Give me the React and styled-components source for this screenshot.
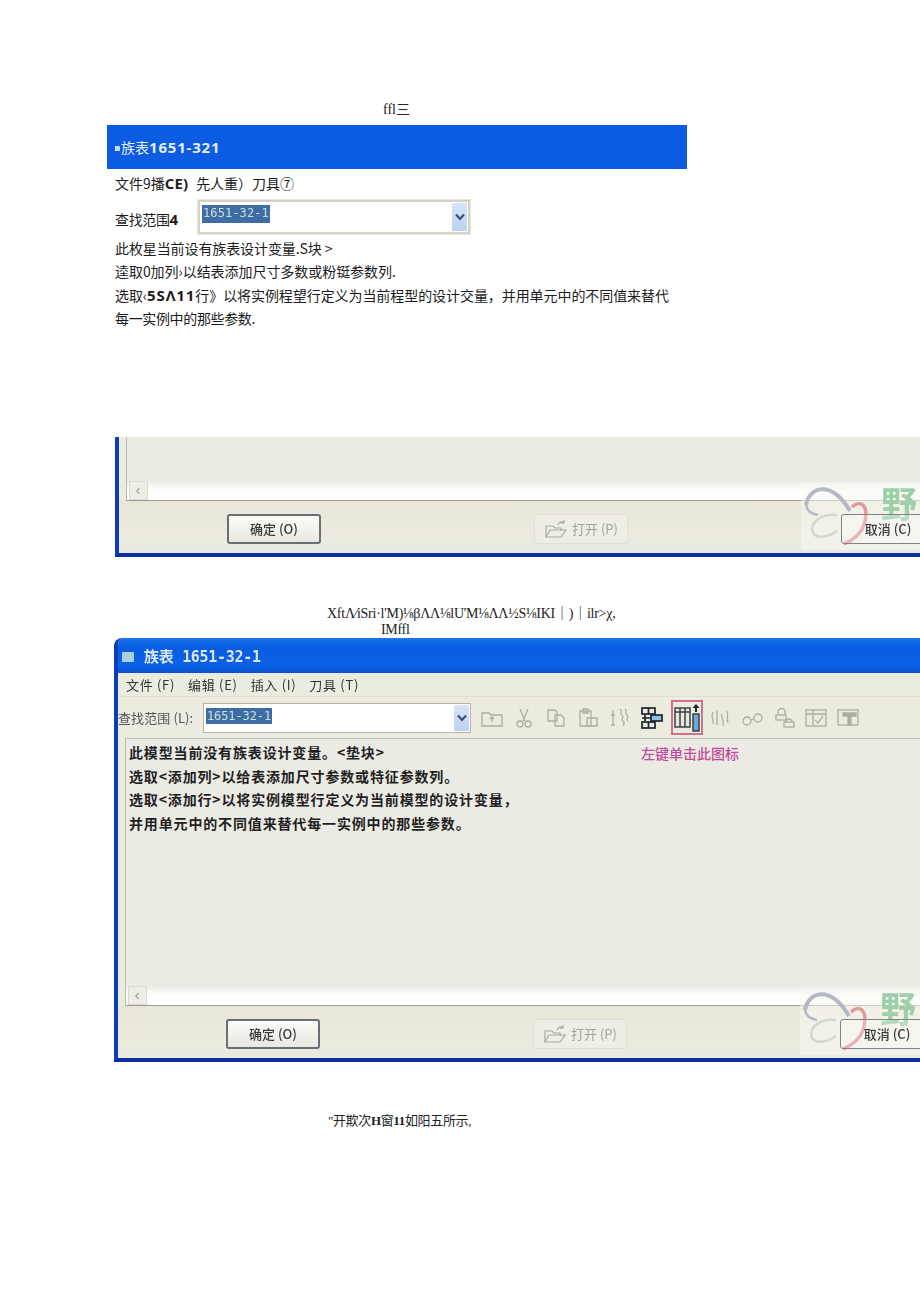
import React from "react";
import styled, { createGlobalStyle } from "styled-components";

const Global = createGlobalStyle`
  html, body { margin: 0; padding: 0; background: #fff; }
  body { width: 920px; height: 1301px; overflow: hidden; }
`;
const cjk = `"Noto Sans CJK SC", "Noto Sans", sans-serif`;
const Page = styled.div`
  width: 920px; height: 1301px; overflow: hidden; padding-top: 101px; box-sizing: border-box;
  font-family: ${cjk}; color: #1c1c1c;
`;
const Caption = styled.div`
  font-family: "Liberation Serif", "Noto Sans CJK SC", serif;
  font-size: ${p => p.$size || 14}px; line-height: ${p => p.$lh || 17}px; color: #222;
  margin-left: ${p => p.$left}px; margin-top: ${p => p.$top || 0}px;
  letter-spacing: ${p => p.$ls || 0}px; white-space: nowrap;
`;
const Doc = styled.div`
  width: 580px; margin: 7px 0 0 107px;
`;
const Title = styled.div`
  height: 44px; background: #0b5ce2; color: #e3edf7; display: flex; align-items: center;
  padding-left: 8px; font-size: 14px; font-weight: 400;
  b { font-family: "Open Sans", sans-serif; font-weight: 700; letter-spacing: .8px; font-size: 15px; }
  i { width: 5px; height: 5px; background: #c9d9ee; margin-right: 1px; margin-top: 2px; }
`;
const DocBody = styled.div`
  padding: 4px 0 0 8px; font-size: 14px; line-height: 23.3px; white-space: nowrap; letter-spacing: -.1px;
  b { font-family: "Open Sans", sans-serif; font-weight: 700; font-size: 15px; letter-spacing: .9px; }
`;
const MenuLine = styled.div`
  line-height: 20px; letter-spacing: 0;
  span { margin-left: 8px; }
  b { letter-spacing: .1px; }
`;
const FindRow = styled.div`
  display: flex; align-items: center; margin: 4px 0 3px; height: 37px;
`;
const FindLabel = styled.span`width: 83px; margin-top: 8px; flex: none; letter-spacing: -.35px;`;
const Combo = styled.div`
  width: 268px; height: 30px; margin-top: 2px; background: #fff; border: 2px solid #d4d2c6; outline: 1px solid #e8e7df; display: flex; justify-content: space-between;
  span { align-self: flex-start; background: #3e6ca5; color: #c9e0e0; font: 12px/17px "DejaVu Sans Mono", monospace; height: 18px; padding: 0 1px; margin: 3px 0 0 2px; letter-spacing: .1px; filter: blur(.4px); }
`;
const Arrow = styled.div`
  width: 15px; margin: 1px; background: linear-gradient(#d6e4f7, #bcd2f1); display: flex; align-items: center; justify-content: center; color: #33507a;
`;
const Line = styled.div`letter-spacing: ${p => p.$ls}px;`;
const Win = styled.div`
  position: relative; margin: ${p => p.$top}px 0 0 ${p => p.$left}px; width: 806px; height: ${p => p.$h}px; box-sizing: border-box;
  background: #ecebdf; overflow: hidden; filter: blur(.4px);
  border-left: 4px solid #0a3cbb; border-bottom: 4px solid #0b2fa0;
  border-top-left-radius: ${p => p.$round ? 8 : 0}px;
  display: flex; flex-direction: column;
`;
const WinTitle = styled.div`
  height: 35px; flex: none; box-sizing: border-box; padding: 3px 0 0 4px; background: linear-gradient(#1a76ec, #0a5ce0 25%, #0b61e6 80%, #0a4fcf); color: #d8e6f5; display: flex; align-items: center; gap: 10px;
  font: 700 15px/1 "DejaVu Sans Mono", ${cjk}; letter-spacing: -.3px;
  i { width: 12px; height: 10px; background: #a9cfe0; border-radius: 1px; }
`;
const WinMenu = styled.div`
  height: 23px; flex: none; display: flex; gap: 13px; align-items: center; padding-left: 8px; font-size: 13px; color: #333; letter-spacing: .7px; white-space: nowrap;
`;
const WinTools = styled.div`
  height: 42px; flex: none; display: flex; align-items: center; font-size: 13px; color: #555; white-space: nowrap; border-top: 1px solid #e2e0d4; box-sizing: border-box;
`;
const FindMini = styled.span`width: 85px; flex: none; letter-spacing: .1px;`;
const WinCombo = styled.div`
  width: 268px; height: 30px; flex: none; background: #fff; border: 1px solid #b7b5a8; box-sizing: border-box; display: flex; justify-content: space-between;
  span { align-self: flex-start; background: #3e6ca5; color: #c9e0e0; font: 12px/16px "DejaVu Sans Mono", monospace; height: 16px; margin: 4px 0 0 2px; padding: 0 1px; letter-spacing: -.1px; }
`;
const ToolIcon = styled.span`
  display: inline-flex; width: 24px; height: 26px; margin-right: 8px; align-items: center; justify-content: center; flex: none;
  color: #adada1;
  ${p => p.$sel && `border: 2px solid #d4708f; width: 32px; height: 35px; box-sizing: border-box; margin: 0 5px 0 0;`}
  ${p => p.$on && `margin-right: 7px;`}
`;
const ToolGap = styled.span`width: 9px; flex: none;`;
const Content = styled.div`
  flex: 1; position: relative; margin: 0 0 0 7px; border-top: 1px solid #c0bfb4; border-bottom: 1px solid #9c9c94; border-left: 1px solid #bcbbb0;
  background: #ecebe3; padding: 2px 0 0 3px; font-size: 14px; line-height: 23.500px; font-weight: 700; color: #1f1f1f; letter-spacing: .85px; white-space: nowrap;
`;
const Pink = styled.div`
  position: absolute; left: 515px; top: 3px; font-size: 14px; font-weight: 500; color: #c24a9a; letter-spacing: 0;
`;
const Scroll = styled.div`
  position: absolute; left: 0; right: 0; bottom: 0; height: 19px; background: linear-gradient(#ecebe3, #fff 50%, #fff);
  &::before { content: "‹"; position: absolute; left: 2px; top: 0; bottom: 0; width: 19px; background: #eeede6; border: 1px solid #dcdbd2; box-sizing: border-box; font: 400 15px/16px "Liberation Sans", sans-serif; color: #999; text-align: center; }
`;
const CropContent = styled(Content)`padding: 0; border-top: 0;`;
const Buttons = styled.div`
  height: 52px; flex: none; box-sizing: border-box; padding: 3px 0 0 ${p => p.$pad}px; background: linear-gradient(#e9e6d8, #ecebdf 70%, #e9e9e0); display: flex; align-items: center;
`;
const Btn = styled.div`
  position: relative; z-index: 2; width: 94px; height: 30px; box-sizing: border-box; border: ${p => p.$off ? "1px solid #e0dfd5" : p.$ghost ? "1px solid #7d8488" : "2px solid #66707a"}; border-radius: 3px;
  background: ${p => p.$off ? "#efeee6" : p.$ghost ? "rgba(255,255,255,.25)" : "linear-gradient(#fcfcf8, #e8e8e0)"};
  display: flex; align-items: center; justify-content: center; gap: 4px; font-size: 13px; font-weight: ${p => p.$off ? 400 : 500}; color: ${p => p.$off ? "#a3a39b" : "#3a3a3a"};
  margin-right: ${p => p.$mr || 0}px; flex: none; white-space: nowrap;
`;
const Mark = styled.div`
  position: absolute; right: 0; bottom: 3px; width: 120px; height: 67px; background: rgba(248,248,242,.55); pointer-events: none; z-index: 1;
  b { position: absolute; left: 80px; top: 6px; height: 26px; font-size: 36px; font-weight: 700; color: #9dd0a9; line-height: 26px; }
  svg { position: absolute; left: 0; top: 0; }
`;

const Chevron = () => (
  <svg width="10" height="8" viewBox="0 0 10 8"><path d="M1 1.500 5 6l4-4.500" fill="none" stroke="currentColor" strokeWidth="2" /></svg>
);
const S = ({ children }) => (
  <svg width="22" height="22" viewBox="0 0 22 22" fill="none" stroke="currentColor" strokeWidth="1.300">{children}</svg>
);
const icons = [
  <S key="a"><path d="M1 6h7l2 2h11v11H1z" /><path d="M11 15v-5M9 12l2-2 2 2" /></S>,
  <S key="b"><path d="M7 2l5 12M15 2l-5 12" /><circle cx="7" cy="17" r="3" /><circle cx="15" cy="17" r="3" /></S>,
  <S key="c"><path d="M3 3h7l2 2v9H3z" /><path d="M10 8h6l3 3v8h-9z" /></S>,
  <S key="d"><path d="M3 4h11v15H3z" /><path d="M6 2h5v4H6z" /><path d="M10 11h10v8H10z" /></S>,
  <S key="e"><path d="M4 3v15M2 18h4M2 8h4" /><path d="M11 2c3 2-1 4 2 6s-2 4 1 6-1 3 1 5M16 2c3 2-1 4 2 6s-2 4 1 6" /></S>,
];
const icons2 = [
  <S key="f"><path d="M4 5c-3 5 1 7 0 12M8 3v15M13 7c-2 4 3 6 1 12M18 4c2 4-1 8 1 12" /></S>,
  <S key="g"><circle cx="6" cy="14" r="4" /><circle cx="17" cy="11" r="4" /><path d="M10 13l3-1" /></S>,
  <S key="h"><path d="M5 8V5a3.500 3.500 0 0 1 7 0v3" /><rect x="3" y="8" width="10" height="5" /><path d="M13 16v-1a3 3 0 0 1 6 0" /><rect x="11" y="15" width="10" height="5" /></S>,
  <S key="i"><rect x="1" y="3" width="20" height="16" /><path d="M1 7h20M8 3v16M10 13l3 3 5-7" /></S>,
  <S key="j"><rect x="1" y="3" width="20" height="15" /><path d="M6 6h13v3h-5v9h-3V9H6z" fill="currentColor" /></S>,
];
const TreeIcon = () => (
  <svg width="24" height="24" viewBox="0 0 24 24" fill="none" stroke="#1d2530" strokeWidth="1.700">
    <rect x="2" y="2" width="13" height="6" /><path d="M8.500 2v6M8.500 16v6" /><rect x="2" y="16" width="13" height="6" />
    <rect x="11" y="9" width="11" height="6" fill="#8fc0e8" /><path d="M2 12h9M5 9v6" />
  </svg>
);
const ColIcon = () => (
  <svg width="26" height="30" viewBox="0 0 26 30" fill="none" stroke="#3b4046" strokeWidth="1.500">
    <rect x="1" y="5" width="15" height="19" fill="#e8e8de" /><path d="M6 5v19M11 5v19M1 9h15" />
    <rect x="19" y="11" width="6" height="17" fill="#69a9dc" /><path d="M22 9V3" stroke="#1d2530" strokeWidth="2" /><path d="M18.500 5 22 1l3.500 4z" fill="#1d2530" stroke="none" />
  </svg>
);
const OpenIcon = () => (
  <svg width="24" height="20" viewBox="0 0 24 20" fill="none" stroke="#a9a9a0" strokeWidth="1.200"><path d="M2 18V7h7l2 2h6v3" /><path d="M2 18l4-7h16l-5 7z" /><path d="M14 6c1-3 4-4 6-2M20 1v3h-3" /></svg>
);
const Logo = () => (
  <svg width="80" height="67" viewBox="0 0 80 67" fill="none">
    <path d="M5 22C8 4 30-4 49 28" stroke="#b4b9c3" strokeWidth="4" />
    <path d="M5 22c1 6 6 9 12 10" stroke="#b4b9c3" strokeWidth="2.500" />
    <path d="M51 24c8-8 18-2 12 18-3 9-11 15-20 19" stroke="#e09a9c" strokeWidth="3.500" />
    <path d="M36 32C20 30 8 40 12 50c4 6 16 4 24-2" stroke="#d2d8d0" strokeWidth="2.500" />
  </svg>
);
const Watermark = () => <Mark><Logo /><b>野</b></Mark>;

const Footer = ({ pad }) => (
  <Buttons $pad={pad}>
    <Btn $mr={213}>确定 (O)</Btn>
    <Btn $off $mr={213}><OpenIcon />打开 (P)</Btn>
    <Btn $ghost>取消 (C)</Btn>
  </Buttons>
);

export default function App() {
  return (
    <Page>
      <Global />
      <Caption $left={383}>ffl三</Caption>
      <Doc>
        <Title><i />族表<b>1651-321</b></Title>
        <DocBody>
          <MenuLine>文件9播<b>CE)</b><span>先人重）刀具⑦</span></MenuLine>
          <FindRow>
            <FindLabel>查找范围<b>4</b></FindLabel>
            <Combo><span>1651-32-1</span><Arrow><Chevron /></Arrow></Combo>
          </FindRow>
          <Line $ls={-.1}>此枚星当前设有族表设计变量.S块 &gt;</Line>
          <Line $ls={-.05}>逵取0加列›以结表添加尺寸多数或粉铤参数列.</Line>
          <Line $ls={-.07}>选取‹<b>5SΛ11</b>行》以将实例程望行定义为当前程型的设计交量，并用单元中的不同值来替代</Line>
          <Line $ls={-.35}>每一实例中的那些参数.</Line>
        </DocBody>
      </Doc>
      <Win $top={107} $left={115} $h={120}>
        <CropContent><Scroll /></CropContent>
        <Footer pad={108} />
        <Watermark />
      </Win>
      <Caption $left={327} $top={48} $ls={-.25}>XftΛ⁄iSri·l'M)⅛βΛΛ⅛lU'M⅛ΛΛ½S⅛IKI｜)｜ilr&gt;χ,</Caption>
      <Caption $left={381} $ls={-.3} $lh={15}>IMffl</Caption>
      <Win $top={1} $left={114} $h={424} $round>
        <WinTitle><i />族表 1651-32-1</WinTitle>
        <WinMenu><span>文件 (F)</span><span>编辑 (E)</span><span>插入 (I)</span><span>刀具 (T)</span></WinMenu>
        <WinTools>
          <FindMini>查找范围 (L):</FindMini>
          <WinCombo><span>1651-32-1</span><Arrow><Chevron /></Arrow></WinCombo>
          <ToolGap />
          {icons.map((ic, i) => <ToolIcon key={i}>{ic}</ToolIcon>)}
          <ToolIcon $on><TreeIcon /></ToolIcon>
          <ToolIcon $sel><ColIcon /></ToolIcon>
          {icons2.map((ic, i) => <ToolIcon key={i}>{ic}</ToolIcon>)}
        </WinTools>
        <Content>
          <div>此模型当前没有族表设计变量。&lt;垫块&gt;</div>
          <div>选取&lt;添加列&gt;以给表添加尺寸参数或特征参数列。</div>
          <div>选取&lt;添加行&gt;以将实例模型行定义为当前模型的设计变量，</div>
          <div>并用单元中的不同值来替代每一实例中的那些参数。</div>
          <Pink>左键单击此图标</Pink>
          <Scroll />
        </Content>
        <Footer pad={108} />
        <Watermark />
      </Win>
      <Caption $left={328} $top={50} $size={13} $ls={-.35}>"开欺次<b>H</b>窗<b>11</b>如阳五所示,</Caption>
    </Page>
  );
}
